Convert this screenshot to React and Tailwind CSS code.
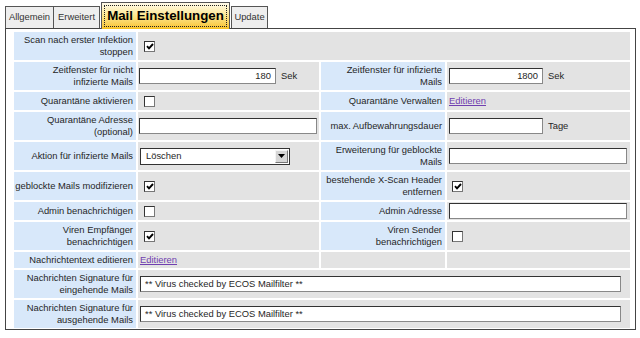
import React from "react";

const L = ({ children, className = "" }) => (
  <div className={"bg-[#d8e8fa] flex items-center justify-end text-right pr-[3px] leading-[12.5px] whitespace-nowrap " + className}>
    {children}
  </div>
);

const V = ({ children, className = "" }) => (
  <div className={"bg-[#e3e3e3] flex items-center whitespace-nowrap " + className}>{children}</div>
);

const Input = ({ w, value = "", right = false }) => (
  <div
    className={
      "h-[16px] bg-white border border-t-[#333] border-l-[#333] border-r-[#888] border-b-[#888] flex items-center px-[4px] " +
      (right ? "justify-end " : "justify-start ")
    }
    style={{ width: w }}
  >
    {value}
  </div>
);

const Check = ({ checked }) => (
  <div className="w-[11px] h-[11px] bg-white border border-t-[#333] border-l-[#333] border-r-[#777] border-b-[#777] flex items-center justify-center">
    {checked && (
      <svg width="8" height="7" viewBox="0 0 8 7">
        <path d="M1 3.2 L3 5.4 L7 1" stroke="#000" strokeWidth="1.9" fill="none" />
      </svg>
    )}
  </div>
);

const Link = ({ children }) => <span className="text-[#7040b0] underline">{children}</span>;

export default function App() {
  return (
    <div
      className="bg-white w-[640px] h-[338px] text-[#262626] text-[9.4px]"
      style={{ fontFamily: '"Liberation Sans", Arial, sans-serif' }}
    >
      {/* tabs */}
      <div className="flex items-end h-[28px] pl-[5px]">
        <div className="h-[22px] w-[49px] bg-[#eeeeee] border border-b-0 border-[#555] flex items-center justify-center text-[#333]">
          Allgemein
        </div>
        <div className="h-[22px] w-[47px] -ml-px bg-[#eeeeee] border border-b-0 border-[#555] flex items-center justify-center text-[#333]">
          Erweitert
        </div>
        <div className="relative z-10 -mb-px ml-[1px] h-[27px] w-[129px] border border-b-0 border-[#555] bg-gradient-to-b from-[#fffbea] via-[#fde68a] to-[#f8c21c] p-[2px]">
          <div className="h-full w-full border border-dotted border-[#222] flex items-center justify-center text-[13.3px] font-bold text-black leading-none">
            Mail Einstellungen
          </div>
        </div>
        <div className="h-[22px] w-[37px] ml-[1px] bg-[#eeeeee] border border-b-0 border-[#555] flex items-center justify-center text-[#333]">
          Update
        </div>
      </div>

      {/* panel */}
      <div className="ml-[5px] w-[631px] border border-[#444] pt-[3px] pl-[8px] pr-[4px] pb-[1px]">
        <div className="grid grid-cols-[122px_181px_124px_183px] grid-rows-[28px_28px_18px_28px_28px_28px_18px_28px_16px_28px_28px] gap-[2px]">
          {/* row 1 */}
          <L>
            Scan nach erster Infektion
            <br />
            stoppen
          </L>
          <V className="col-span-3 pl-[6px]">
            <Check checked />
          </V>

          {/* row 2 */}
          <L>
            Zeitfenster für nicht
            <br />
            infizierte Mails
          </L>
          <V className="pl-[1px]">
            <Input w={137} value="180" right />
            <span className="ml-[5px]">Sek</span>
          </V>
          <L>
            Zeitfenster für infizierte
            <br />
            Mails
          </L>
          <V className="pl-[2px]">
            <Input w={94} value="1800" right />
            <span className="ml-[5px]">Sek</span>
          </V>

          {/* row 3 */}
          <L>Quarantäne aktivieren</L>
          <V className="pl-[6px]">
            <Check />
          </V>
          <L>Quarantäne Verwalten</L>
          <V className="pl-[2px]">
            <Link>Editieren</Link>
          </V>

          {/* row 4 */}
          <L>
            Quarantäne Adresse
            <br />
            (optional)
          </L>
          <V className="pl-[1px]">
            <Input w={178} />
          </V>
          <L>max. Aufbewahrungsdauer</L>
          <V className="pl-[2px]">
            <Input w={94} />
            <span className="ml-[5px]">Tage</span>
          </V>

          {/* row 5 */}
          <L>Aktion für infizierte Mails</L>
          <V className="pl-[2px]">
            <div className="h-[17px] w-[150px] bg-white border border-[#333] flex items-stretch">
              <div className="flex-1 flex items-center pl-[5px]">Löschen</div>
              <div className="w-[13px] m-[1px] bg-[#d6d6d6] border border-t-[#f4f4f4] border-l-[#f4f4f4] border-r-[#777] border-b-[#777] flex items-center justify-center">
                <svg width="7" height="4" viewBox="0 0 7 4">
                  <path d="M0 0 H7 L3.5 4 Z" fill="#000" />
                </svg>
              </div>
            </div>
          </V>
          <L>
            Erweiterung für geblockte
            <br />
            Mails
          </L>
          <V className="pl-[2px]">
            <Input w={178} />
          </V>

          {/* row 6 */}
          <L>geblockte Mails modifizieren</L>
          <V className="pl-[6px]">
            <Check checked />
          </V>
          <L>
            bestehende X-Scan Header
            <br />
            entfernen
          </L>
          <V className="pl-[5px]">
            <Check checked />
          </V>

          {/* row 7 */}
          <L>Admin benachrichtigen</L>
          <V className="pl-[6px]">
            <Check />
          </V>
          <L>Admin Adresse</L>
          <V className="pl-[2px]">
            <Input w={178} />
          </V>

          {/* row 8 */}
          <L>
            Viren Empfänger
            <br />
            benachrichtigen
          </L>
          <V className="pl-[6px]">
            <Check checked />
          </V>
          <L>
            Viren Sender
            <br />
            benachrichtigen
          </L>
          <V className="pl-[5px]">
            <Check />
          </V>

          {/* row 9 */}
          <L>Nachrichtentext editieren</L>
          <V className="pl-[2px]">
            <Link>Editieren</Link>
          </V>
          <V />
          <V />

          {/* row 10 */}
          <L>
            Nachrichten Signature für
            <br />
            eingehende Mails
          </L>
          <V className="col-span-3 pl-[2px]">
            <Input w={481} value="** Virus checked by ECOS Mailfilter **" />
          </V>

          {/* row 11 */}
          <L>
            Nachrichten Signature für
            <br />
            ausgehende Mails
          </L>
          <V className="col-span-3 pl-[2px]">
            <Input w={481} value="** Virus checked by ECOS Mailfilter **" />
          </V>
        </div>
      </div>
    </div>
  );
}
